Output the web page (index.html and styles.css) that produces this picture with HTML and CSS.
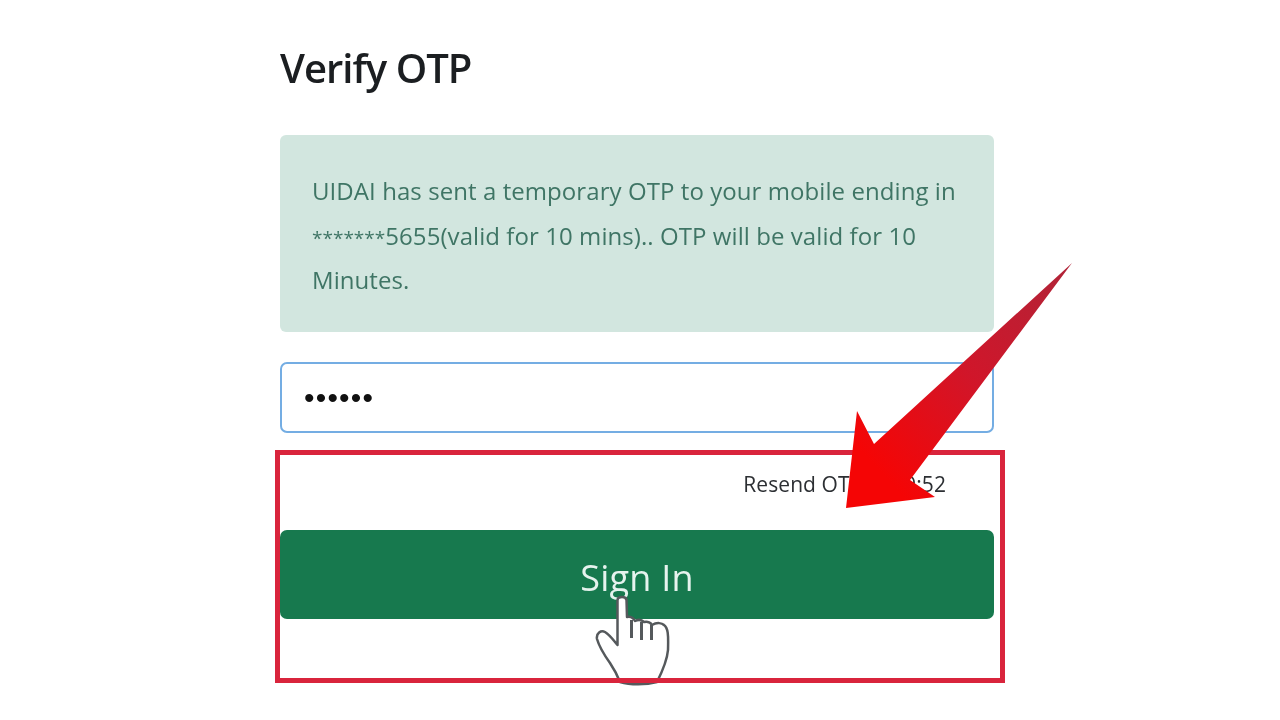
FILE: index.html
```html
<!DOCTYPE html>
<html lang="en">
<head>
  <meta charset="UTF-8" />
  <title>Verify OTP</title>
  <link rel="stylesheet" href="styles.css">
</head>
<body>

  <main class="card">
    <h1 class="title">Verify OTP</h1>

    <div class="alert">
      UIDAI has sent a temporary OTP to your mobile ending in <span class="mask">*******</span>5655(valid for 10 mins).. OTP will be valid for 10 Minutes.
    </div>

    <input class="otp-input" type="password" value="123456" />

    <p class="resend">Resend OTP in 09:52</p>

    <button class="sign-in" type="button">Sign In</button>
  </main>

  <!-- Annotations on top of the screenshot -->
  <svg class="hand" viewBox="0 0 90 100" aria-hidden="true">
    <path d="M27.5 10 C28 6 36 6 36.5 10 L37 27 C41 26 44 29 45 31 C49 29 52 30 54 32 C58 31 61 33 62 35 C67 32 72 33 74 35 C78 38 78.5 44 78 60 C77 72 71 84 67 92 C56 95 40 95 30 92 C27 84 24 79 20 73 C15 66 9 56 7 49 C6 43 11 40 15 42 C20 45 24 51 27.5 55 Z" />
    <path class="hand-line" d="M41.5 30 L41.5 48 M51.5 32 L51.5 50 M61.5 35 L61.5 50" />
  </svg>

  <div class="highlight"></div>

  <svg class="arrow" viewBox="0 0 240 260" aria-hidden="true">
    <defs>
      <linearGradient id="arrowFill" x1="0" y1="1" x2="1" y2="0">
        <stop offset="0.15" stop-color="#f50505" />
        <stop offset="0.55" stop-color="#d0162a" />
        <stop offset="1" stop-color="#b02438" />
      </linearGradient>
    </defs>
    <polygon points="242,3 80,220 105,237 16,248 27,151 44,184" fill="url(#arrowFill)" />
  </svg>

</body>
</html>
```

FILE: styles.css
```css
body {
  margin: 0;
  background: #fff;
  font-family: 'Open Sans', 'Noto Sans', sans-serif;
  color: #212529;
  overflow: hidden;
}

.card {
  width: 714px;
  margin-left: 280px;
  padding-top: 40px;
  filter: blur(0.4px);
}

.title {
  margin: 0 0 40px;
  font-size: 40px;
  font-weight: 600;
  line-height: 55px;
  letter-spacing: -1px;
  color: #1b1e21;
}

.alert {
  box-sizing: border-box;
  height: 197px;
  padding: 34px 32px;
  background: #d2e6df;
  border-radius: 6px;
  color: #3f7565;
  font-size: 24px;
  line-height: 44.5px;
  letter-spacing: 0.07px;
}

.mask {
  font-size: 19px;
  line-height: 1;
  letter-spacing: 0;
}

.otp-input {
  display: block;
  box-sizing: border-box;
  width: 714px;
  height: 71px;
  margin-top: 30px;
  padding: 0 22px;
  border: 2px solid #74ade3;
  border-radius: 7px;
  outline: none;
  font-family: 'Liberation Sans', sans-serif;
  font-size: 30px;
  letter-spacing: 1.2px;
  color: #111;
}

.resend {
  margin: 37px 48px 0 0;
  text-align: right;
  font-size: 21px;
  line-height: 28px;
  letter-spacing: 0.1px;
  color: #2c2f33;
}

.sign-in {
  display: block;
  width: 714px;
  height: 89px;
  margin-top: 32px;
  padding: 5px 0 0;
  border: 0;
  border-radius: 7px;
  background: #17794e;
  color: #e6f3ee;
  font-family: inherit;
  font-size: 36px;
  letter-spacing: 0.2px;
}

.highlight {
  position: absolute;
  left: 275px;
  top: 450px;
  box-sizing: border-box;
  width: 730px;
  height: 233px;
  border: 5px solid #d9243c;
}

.arrow {
  position: absolute;
  left: 830px;
  top: 260px;
  width: 240px;
  height: 260px;
  overflow: visible;
}

.hand {
  position: absolute;
  left: 590px;
  top: 590px;
  width: 90px;
  height: 100px;
  filter: blur(0.4px);
}

.hand path {
  fill: #fff;
  stroke: #55595c;
  stroke-width: 2.5;
  stroke-linejoin: round;
}

.hand .hand-line {
  fill: none;
  stroke-width: 3;
}
```
